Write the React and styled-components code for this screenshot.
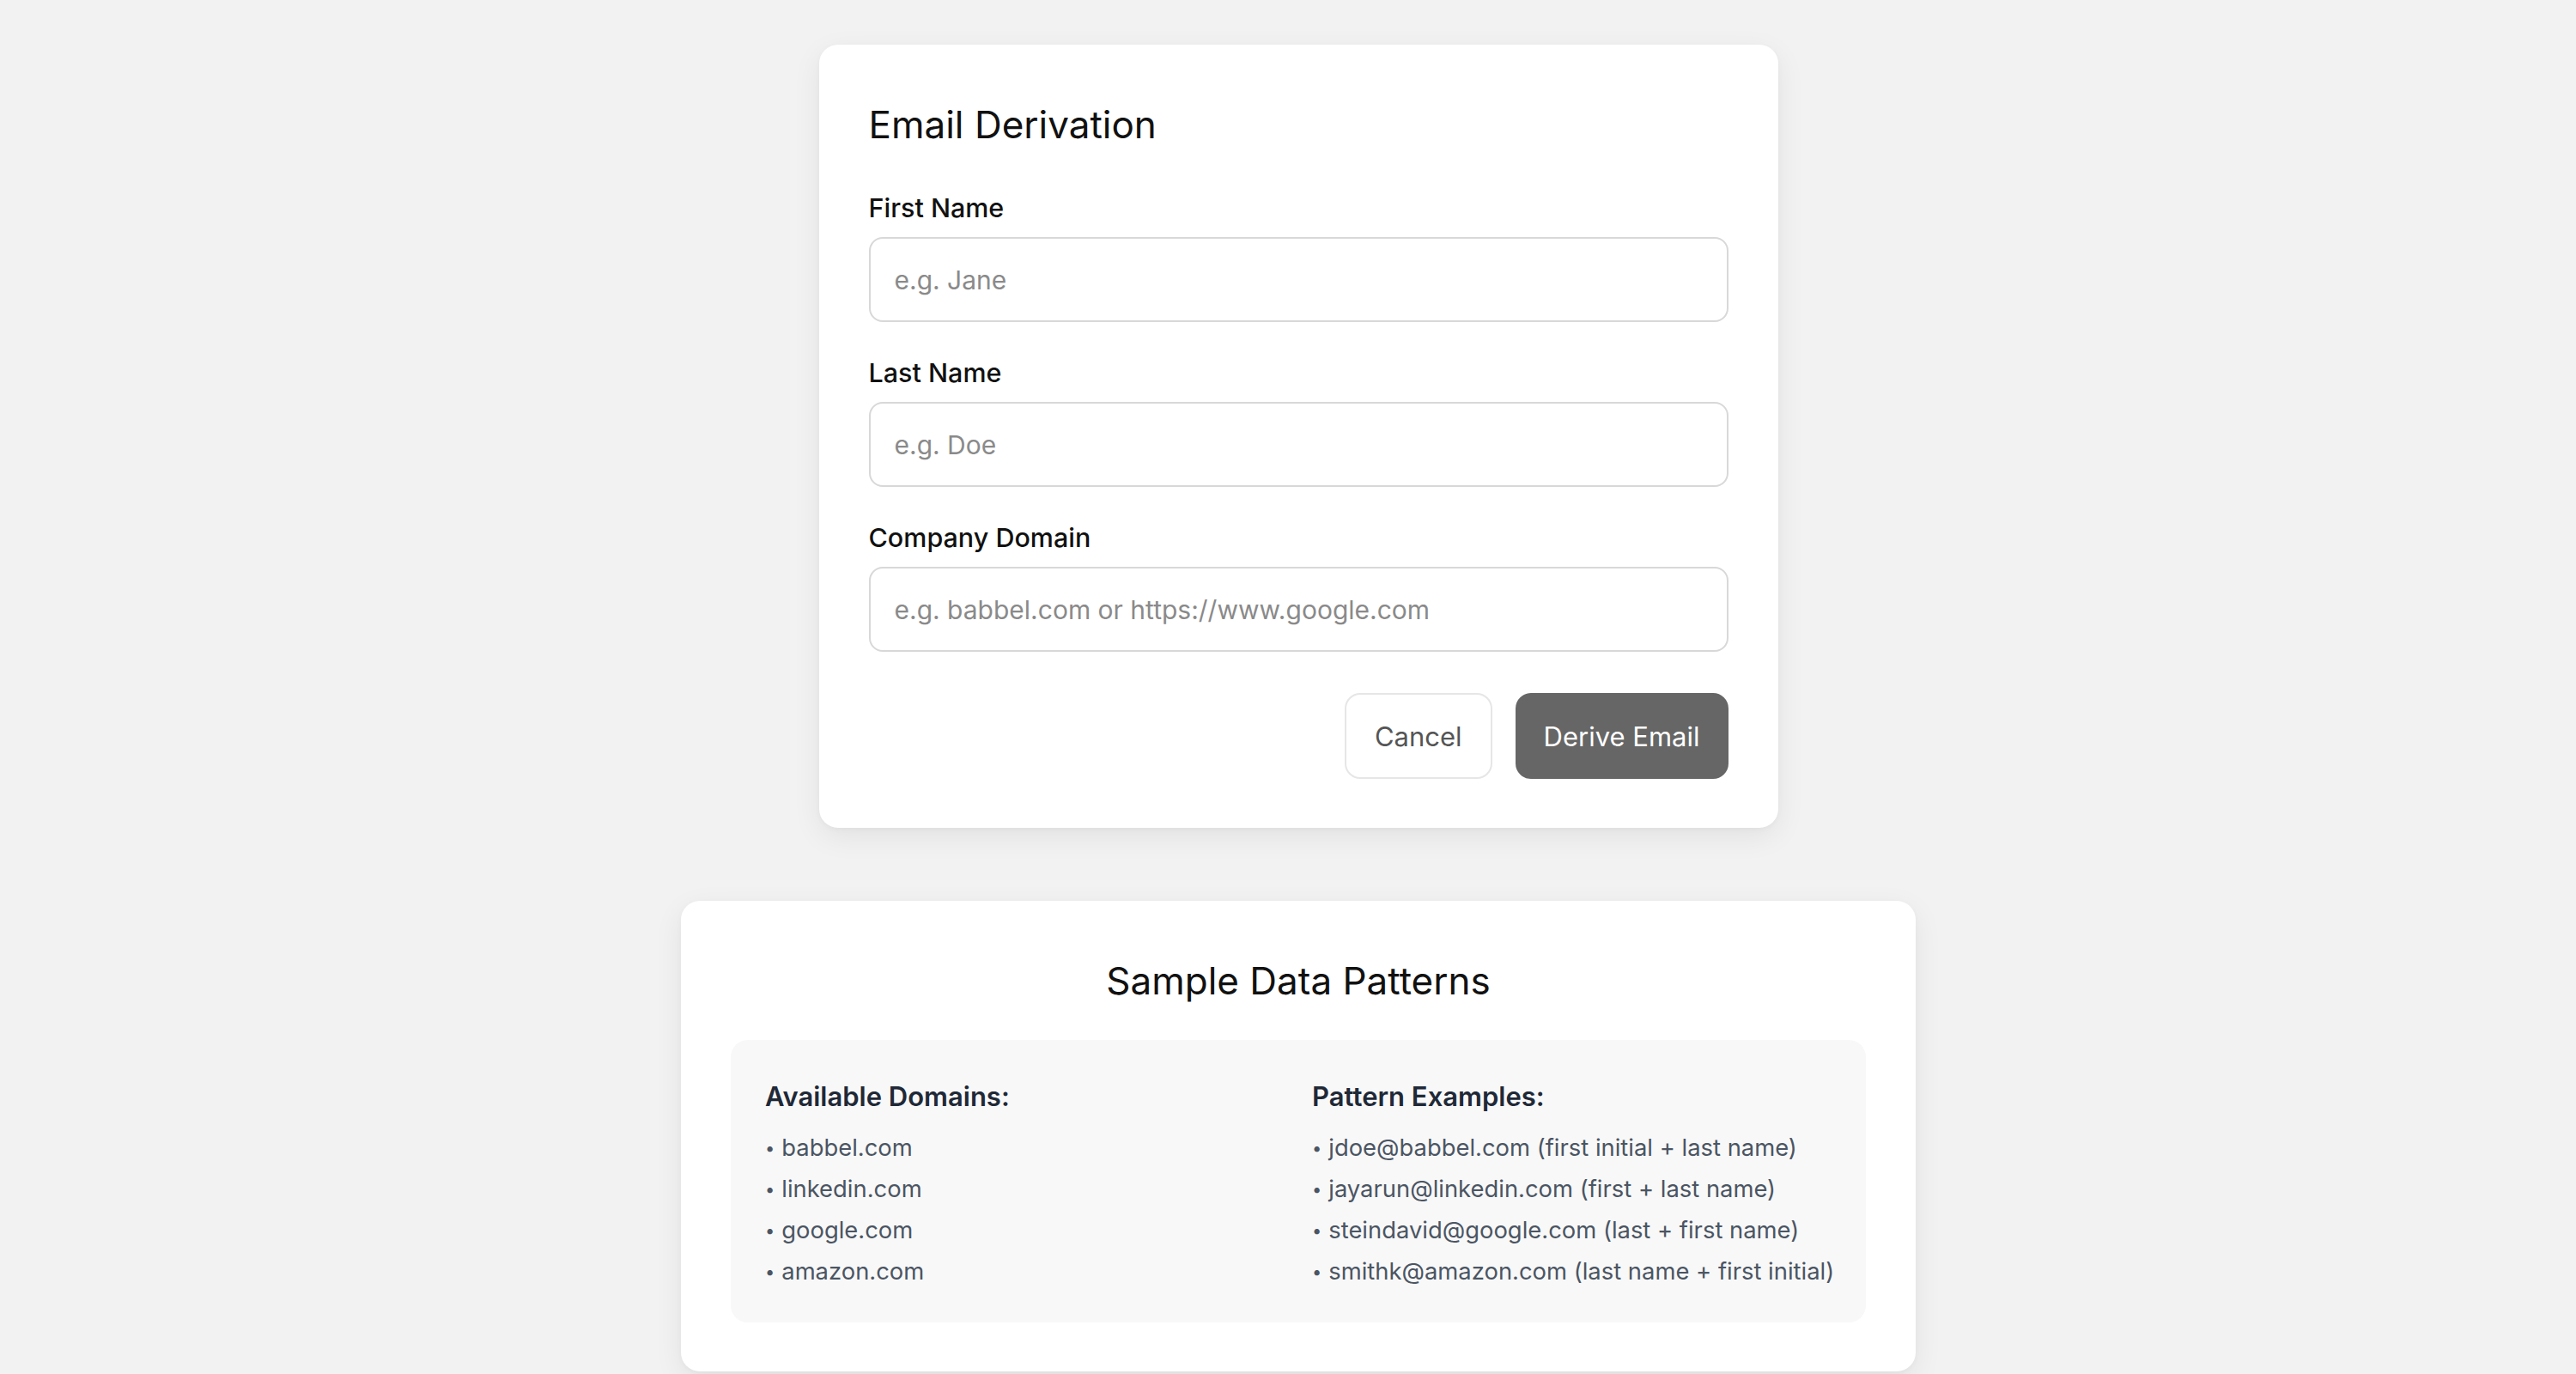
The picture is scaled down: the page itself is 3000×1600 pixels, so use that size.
import React from 'react';
import styled, { createGlobalStyle } from 'styled-components';

const Global = createGlobalStyle`
  html, body {
    margin: 0;
    padding: 0;
    background: #f2f2f2;
    font-family: Inter, "Noto Sans", "Liberation Sans", sans-serif;
  }
  * { box-sizing: border-box; }
`;

const Page = styled.div`
  display: flex;
  flex-direction: column;
  align-items: center;
  gap: 85px;
  padding: 52px 0 40px 24px;
  min-height: 1600px;
`;

const Card = styled.div`
  width: ${p => p.$width}px;
  background: #fff;
  border-radius: 22px;
  box-shadow: 0 10px 34px rgba(0, 0, 0, 0.07), 0 2px 6px rgba(0, 0, 0, 0.03);
  padding: 57px 58px 57px;
`;

const Title = styled.h2`
  margin: 9px 0 0;
  font-size: 44px;
  line-height: 55px;
  font-weight: 400;
  color: #111;
  text-align: ${p => (p.$center ? 'center' : 'left')};
`;

const Form = styled.form`
  display: flex;
  flex-direction: column;
  gap: 42px;
  margin-top: 52px;
`;

const Field = styled.div`
  display: flex;
  flex-direction: column;
  gap: 17px;
`;

const Label = styled.label`
  font-size: 30.5px;
  line-height: 34px;
  font-weight: 500;
  color: #111;
`;

const Input = styled.input`
  height: 99px;
  border: 2px solid #d8d8d8;
  border-radius: 16px;
  padding: 0 28px;
  font-family: inherit;
  font-size: 30px;
  color: #222;
  background: #fff;
  outline: none;
  &::placeholder { color: #8a8a8a; }
`;

const Actions = styled.div`
  display: flex;
  justify-content: flex-end;
  gap: 27px;
  margin-top: 6px;
`;

const Button = styled.button`
  height: 100px;
  padding: 0 ${p => (p.$primary ? 31 : 33)}px;
  border-radius: 18px;
  font-family: inherit;
  font-size: 31px;
  cursor: pointer;
  border: 2px solid ${p => (p.$primary ? '#666' : '#e6e6e6')};
  background: ${p => (p.$primary ? '#666' : '#fff')};
  color: ${p => (p.$primary ? '#fff' : '#555')};
`;

const Panel = styled.div`
  margin-top: 41px;
  background: #f8f8f8;
  border-radius: 20px;
  padding: 48px 40px 35px;
  display: grid;
  grid-template-columns: minmax(0, 1fr) minmax(0, 1fr);
  gap: 32px;
`;

const ColTitle = styled.h3`
  margin: 0 0 18px;
  font-size: 31px;
  line-height: 36px;
  font-weight: 600;
  color: #1f2937;
`;

const List = styled.ul`
  list-style: none;
  margin: 0;
  padding: 0;
`;

const Item = styled.li`
  font-size: 27.4px;
  line-height: 47px;
  color: #4b5563;
  white-space: nowrap;
`;

const Dot = styled.span`
  font-size: 20px;
  margin-right: 8px;
  vertical-align: 2px;
`;

const domains = ['babbel.com', 'linkedin.com', 'google.com', 'amazon.com'];
const patterns = [
  'jdoe@babbel.com (first initial + last name)',
  'jayarun@linkedin.com (first + last name)',
  'steindavid@google.com (last + first name)',
  'smithk@amazon.com (last name + first initial)',
];

export default function App() {
  return (
    <Page>
      <Global />
      <Card $width={1117}>
        <Title>Email Derivation</Title>
        <Form onSubmit={e => e.preventDefault()}>
          <Field>
            <Label>First Name</Label>
            <Input placeholder="e.g. Jane" />
          </Field>
          <Field>
            <Label>Last Name</Label>
            <Input placeholder="e.g. Doe" />
          </Field>
          <Field>
            <Label>Company Domain</Label>
            <Input placeholder="e.g. babbel.com or https://www.google.com" />
          </Field>
          <Actions>
            <Button type="button">Cancel</Button>
            <Button type="submit" $primary>Derive Email</Button>
          </Actions>
        </Form>
      </Card>
      <Card $width={1438}>
        <Title $center>Sample Data Patterns</Title>
        <Panel>
          <div>
            <ColTitle>Available Domains:</ColTitle>
            <List>
              {domains.map(d => <Item key={d}><Dot>•</Dot>{d}</Item>)}
            </List>
          </div>
          <div>
            <ColTitle>Pattern Examples:</ColTitle>
            <List>
              {patterns.map(p => <Item key={p}><Dot>•</Dot>{p}</Item>)}
            </List>
          </div>
        </Panel>
      </Card>
    </Page>
  );
}
